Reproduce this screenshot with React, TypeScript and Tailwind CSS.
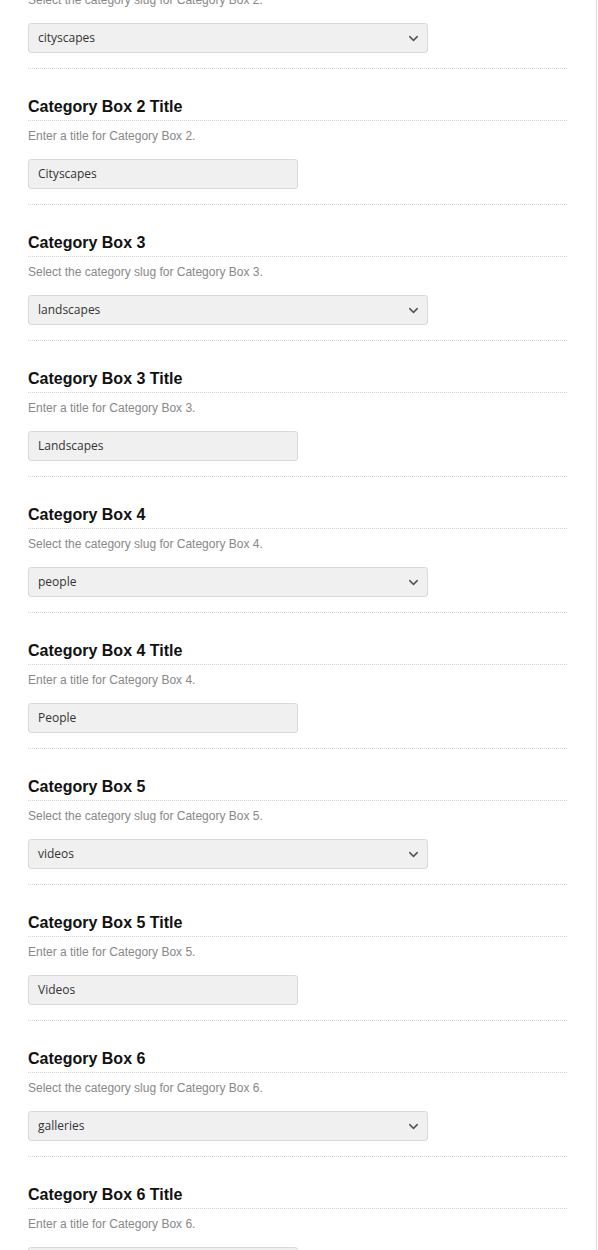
import { ChevronDown } from "lucide-react";

type Field = {
  title: string;
  desc: string;
  kind: "select" | "text";
  value: string;
};

const fields: Field[] = [
  { title: "Category Box 2", desc: "Select the category slug for Category Box 2.", kind: "select", value: "cityscapes" },
  { title: "Category Box 2 Title", desc: "Enter a title for Category Box 2.", kind: "text", value: "Cityscapes" },
  { title: "Category Box 3", desc: "Select the category slug for Category Box 3.", kind: "select", value: "landscapes" },
  { title: "Category Box 3 Title", desc: "Enter a title for Category Box 3.", kind: "text", value: "Landscapes" },
  { title: "Category Box 4", desc: "Select the category slug for Category Box 4.", kind: "select", value: "people" },
  { title: "Category Box 4 Title", desc: "Enter a title for Category Box 4.", kind: "text", value: "People" },
  { title: "Category Box 5", desc: "Select the category slug for Category Box 5.", kind: "select", value: "videos" },
  { title: "Category Box 5 Title", desc: "Enter a title for Category Box 5.", kind: "text", value: "Videos" },
  { title: "Category Box 6", desc: "Select the category slug for Category Box 6.", kind: "select", value: "galleries" },
  { title: "Category Box 6 Title", desc: "Enter a title for Category Box 6.", kind: "text", value: "" },
];

function OptionRow({ field }: { field: Field }) {
  return (
    <div className="pt-[28px] pb-[15px] border-b border-dotted border-[#d4d4d4]">
      {/* Title */}
      <h3 className="text-[16px] leading-5 font-bold text-[#111] pb-[3px] border-b border-dotted border-[#d4d4d4] font-['Liberation_Sans',Arial,sans-serif]">
        {field.title}
      </h3>
      <p className="mt-[6px] text-[12px] leading-[18px] text-[#888] font-['Liberation_Sans',Arial,sans-serif]">
        {field.desc}
      </p>

      {/* Control */}
      {field.kind === "select" ? (
        <div className="mt-[14px] relative flex items-center h-[30px] w-[400px] rounded-[3px] border border-[#dadada] bg-[#f0f0f0] px-[9px] text-[12px] text-[#333] font-['Open_Sans',sans-serif]">
          <span>{field.value}</span>
          <ChevronDown size={15} strokeWidth={2.4} className="absolute right-[6px] text-[#555]" />
        </div>
      ) : (
        <div className="mt-[14px] flex items-center h-[30px] w-[270px] rounded-[3px] border border-[#dadada] bg-[#f0f0f0] px-[9px] text-[12px] text-[#333] font-['Open_Sans',sans-serif]">
          {field.value}
        </div>
      )}
    </div>
  );
}

export default function App() {
  return (
    <div className="h-[1250px] w-[598px] overflow-hidden bg-white">
      <div className="flex flex-col h-full w-[597px] border-r border-[#dedede] pl-[28px] pr-[29px]">
        <div className="mt-[-67px]">
          {fields.map((f) => (
            <OptionRow key={f.title} field={f} />
          ))}
        </div>
      </div>
    </div>
  );
}
